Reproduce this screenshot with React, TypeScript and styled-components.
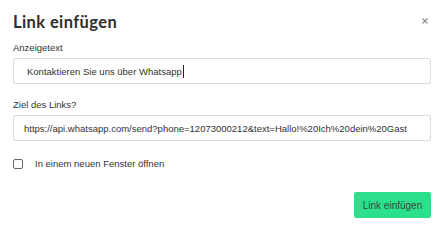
import styled, { createGlobalStyle } from "styled-components";

const Global = createGlobalStyle`
  html, body { margin: 0; padding: 0; background: #fff; }
  body { font-family: "Liberation Sans", Arial, sans-serif; }
  * { box-sizing: border-box; }
`;

const Dialog = styled.div`
  width: 440px;
  height: 232px;
  padding: 12px 9px 0 13px;
  display: flex;
  flex-direction: column;
`;

const Header = styled.div`
  display: flex;
  justify-content: space-between;
  align-items: flex-start;
  height: 30px;
`;

const Title = styled.h1`
  margin: 0;
  font-family: Lato, sans-serif;
  font-weight: 700;
  font-size: 16.5px;
  line-height: 20px;
  letter-spacing: 0.4px;
  color: #2e2e2e;
`;

const Close = styled.button`
  border: none;
  background: none;
  padding: 0;
  margin-top: 3px;
  width: 12px;
  height: 12px;
  display: flex;
  align-items: center;
  justify-content: center;
  cursor: pointer;
`;

const Field = styled.div`
  display: flex;
  flex-direction: column;
  gap: 4px;
  width: 418px;
  margin-bottom: 15px;
`;

const Label = styled.label`
  font-size: 9.5px;
  line-height: 12px;
  color: #333;
`;

const Input = styled.div<{ $indent: number }>`
  height: 26px;
  border: 1px solid #dcdcdc;
  border-radius: 2px;
  padding-left: ${(p) => p.$indent}px;
  display: flex;
  align-items: center;
  font-size: 9.5px;
  color: #333;
  white-space: nowrap;
  overflow: hidden;
`;

const Caret = styled.span`
  display: inline-block;
  width: 1px;
  height: 13px;
  background: #222;
  margin-left: 1px;
`;

const CheckRow = styled.label`
  display: flex;
  align-items: center;
  gap: 12px;
  margin-top: 2px;
  font-size: 9.5px;
  color: #333;
`;

const Box = styled.span`
  width: 10px;
  height: 10px;
  border: 1px solid #666;
  border-radius: 2px;
`;

const Footer = styled.div`
  display: flex;
  justify-content: flex-end;
  width: 418px;
  margin-top: 23px;
`;

const Primary = styled.button`
  width: 77px;
  height: 26px;
  border: none;
  border-radius: 2px;
  background: #2ae08a;
  color: #3d4a43;
  font-family: "Liberation Sans", Arial, sans-serif;
  font-size: 10px;
  cursor: pointer;
`;

export default function App() {
  return (
    <>
      <Global />
      <Dialog>
        <Header>
          <Title>Link einfügen</Title>
          <Close aria-label="Schließen">
            <svg width="6" height="6" viewBox="0 0 6 6">
              <path d="M0.5 0.5 L5.5 5.5 M5.5 0.5 L0.5 5.5" stroke="#8a8a8a" strokeWidth="1.1" />
            </svg>
          </Close>
        </Header>
        <Field>
          <Label>Anzeigetext</Label>
          <Input $indent={13}>
            Kontaktieren Sie uns über Whatsapp
            <Caret />
          </Input>
        </Field>
        <Field>
          <Label>Ziel des Links?</Label>
          <Input $indent={10}>
            https://api.whatsapp.com/send?phone=12073000212&text=Hallo!%20Ich%20dein%20Gast
          </Input>
        </Field>
        <CheckRow>
          <Box />
          In einem neuen Fenster öffnen
        </CheckRow>
        <Footer>
          <Primary>Link einfügen</Primary>
        </Footer>
      </Dialog>
    </>
  );
}
